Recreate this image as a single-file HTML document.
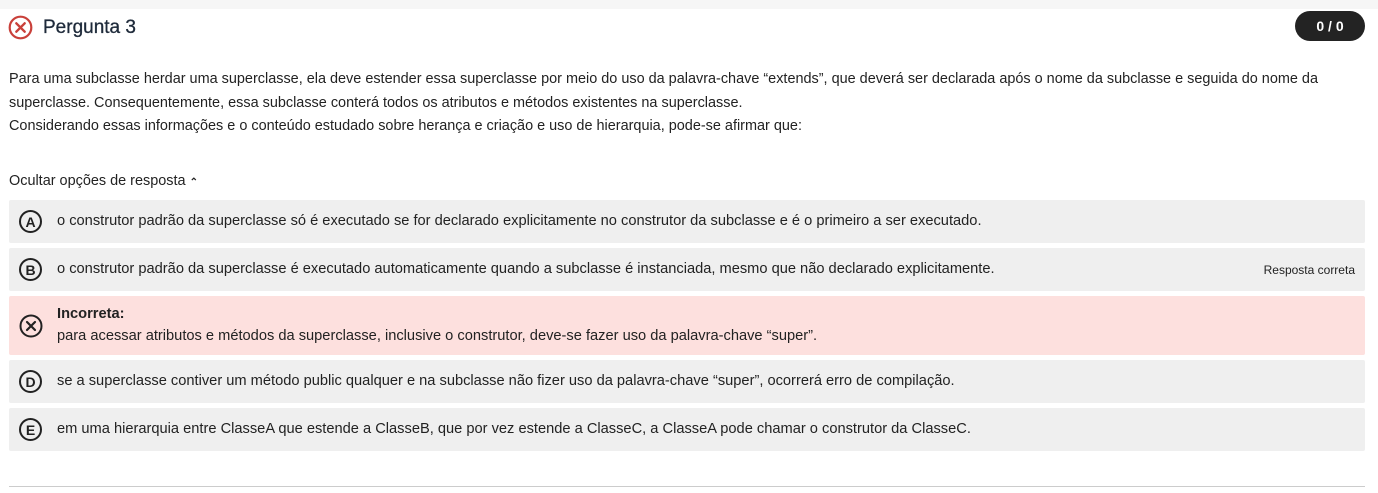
<!DOCTYPE html>
<html><head><meta charset="utf-8"><style>
body{margin:0;width:1378px;height:493px;background:#fff;font-family:"Liberation Sans",sans-serif;color:#222;position:relative;overflow:hidden}
.top{position:absolute;left:0;top:0;width:1378px;height:9px;background:#f6f6f6}
.t{position:absolute;white-space:nowrap}
.opt{position:absolute;left:9px;width:1356px;background:#efefef;border-radius:2px}
.opt .l{position:absolute;left:10px;width:23px;height:23px;border:2px solid #222;border-radius:50%;box-sizing:border-box;font-weight:bold;font-size:14px;display:flex;align-items:center;justify-content:center}
.opt .x{position:absolute;left:48px;font-size:14.65px}
</style></head><body>
<div class="top"></div>
<svg style="position:absolute;left:8px;top:15px" width="25" height="25" viewBox="0 0 25 25"><circle cx="12.5" cy="12.5" r="10.8" fill="none" stroke="#c9403a" stroke-width="2.2"/><path d="M8.3 8.3L16.7 16.7M16.7 8.3L8.3 16.7" stroke="#c9403a" stroke-width="2.4" stroke-linecap="round"/></svg>
<div class="t" style="left:43px;top:17px;font-size:19px;color:#1e2a3a;-webkit-text-stroke:0.3px #1e2a3a">Pergunta 3</div>
<div style="position:absolute;left:1295px;top:11px;width:70px;height:30px;background:#232323;border-radius:15px;color:#fff;font-weight:bold;font-size:14px;text-align:center;line-height:30px">0 / 0</div>
<div class="t" style="left:9px;top:68px;font-size:14.45px;line-height:23.5px;white-space:normal;width:1345px">Para uma subclasse herdar uma superclasse, ela deve estender essa superclasse por meio do uso da palavra-chave “extends”, que deverá ser declarada após o nome da subclasse e seguida do nome da superclasse. Consequentemente, essa subclasse conterá todos os atributos e métodos existentes na superclasse.<br>Considerando essas informações e o conteúdo estudado sobre herança e criação e uso de hierarquia, pode-se afirmar que:</div>
<div class="t" style="left:9px;top:173px;font-size:14.45px">Ocultar opções de resposta <span style="font-size:10px;font-weight:bold">&#8963;</span></div>
<div class="opt" style="top:200px;height:43px"><div class="l" style="top:10px">A</div><div class="x" style="top:13px">o construtor padrão da superclasse só é executado se for declarado explicitamente no construtor da subclasse e é o primeiro a ser executado.</div></div>
<div class="opt" style="top:248px;height:43px"><div class="l" style="top:10px">B</div><div class="x" style="top:13px">o construtor padrão da superclasse é executado automaticamente quando a subclasse é instanciada, mesmo que não declarado explicitamente.</div><div class="t" style="right:10px;top:15px;font-size:12px">Resposta correta</div></div>
<div class="opt" style="top:296px;height:59px;background:#fde0de"><svg style="position:absolute;left:10px;top:18px" width="24" height="24" viewBox="0 0 24 24"><circle cx="12" cy="12" r="10.5" fill="none" stroke="#222" stroke-width="2"/><path d="M8 8L16 16M16 8L8 16" stroke="#222" stroke-width="2.2" stroke-linecap="round"/></svg><div class="x" style="top:10px;font-weight:bold">Incorreta:</div><div class="x" style="top:32px">para acessar atributos e métodos da superclasse, inclusive o construtor, deve-se fazer uso da palavra-chave “super”.</div></div>
<div class="opt" style="top:360px;height:43px"><div class="l" style="top:10px">D</div><div class="x" style="top:13px">se a superclasse contiver um método public qualquer e na subclasse não fizer uso da palavra-chave “super”, ocorrerá erro de compilação.</div></div>
<div class="opt" style="top:408px;height:43px"><div class="l" style="top:10px">E</div><div class="x" style="top:13px">em uma hierarquia entre ClasseA que estende a ClasseB, que por vez estende a ClasseC, a ClasseA pode chamar o construtor da ClasseC.</div></div>
<div style="position:absolute;left:9px;top:486px;width:1356px;height:1px;background:#ccc"></div>
</body></html>
